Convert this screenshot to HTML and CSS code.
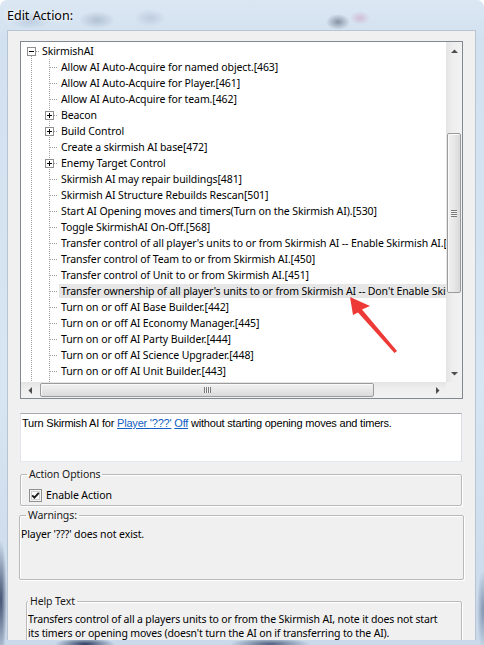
FILE: index.html
```html
<!DOCTYPE html>
<html>
<head>
<meta charset="utf-8">
<link rel="stylesheet" href="styles.css">
</head>
<body>
<div class="window">
  <div class="titlebar"><span class="title">Edit Action:</span></div>
  <div class="client">
    <div class="tree-box">
      <div class="tree-main">
        <div class="tree">
          <div class="row root"><svg class="box" width="9" height="9" viewBox="0 0 9 9"><rect x="0.5" y="0.5" width="8" height="8" fill="#fff" stroke="#8f8f8f"/><path d="M2 4.5h5" stroke="#000"/></svg><span class="hconn short"></span><span class="label">SkirmishAI</span></div>
          <div class="row leaf"><span class="hconn"></span><span class="label">Allow AI Auto-Acquire for named object.[463]</span></div>
          <div class="row leaf"><span class="hconn"></span><span class="label">Allow AI Auto-Acquire for Player.[461]</span></div>
          <div class="row leaf"><span class="hconn"></span><span class="label">Allow AI Auto-Acquire for team.[462]</span></div>
          <div class="row node"><svg class="box" width="9" height="9" viewBox="0 0 9 9"><rect x="0.5" y="0.5" width="8" height="8" fill="#fff" stroke="#8f8f8f"/><path d="M2 4.5h5M4.5 2v5" stroke="#000"/></svg><span class="hconn short"></span><span class="label">Beacon</span></div>
          <div class="row node"><svg class="box" width="9" height="9" viewBox="0 0 9 9"><rect x="0.5" y="0.5" width="8" height="8" fill="#fff" stroke="#8f8f8f"/><path d="M2 4.5h5M4.5 2v5" stroke="#000"/></svg><span class="hconn short"></span><span class="label">Build Control</span></div>
          <div class="row leaf"><span class="hconn"></span><span class="label">Create a skirmish AI base[472]</span></div>
          <div class="row node"><svg class="box" width="9" height="9" viewBox="0 0 9 9"><rect x="0.5" y="0.5" width="8" height="8" fill="#fff" stroke="#8f8f8f"/><path d="M2 4.5h5M4.5 2v5" stroke="#000"/></svg><span class="hconn short"></span><span class="label">Enemy Target Control</span></div>
          <div class="row leaf"><span class="hconn"></span><span class="label">Skirmish AI may repair buildings[481]</span></div>
          <div class="row leaf"><span class="hconn"></span><span class="label">Skirmish AI Structure Rebuilds Rescan[501]</span></div>
          <div class="row leaf"><span class="hconn"></span><span class="label">Start AI Opening moves and timers(Turn on the Skirmish AI).[530]</span></div>
          <div class="row leaf"><span class="hconn"></span><span class="label">Toggle SkirmishAI On-Off.[568]</span></div>
          <div class="row leaf"><span class="hconn"></span><span class="label">Transfer control of all player's units to or from Skirmish AI -- Enable Skirmish AI.[449]</span></div>
          <div class="row leaf"><span class="hconn"></span><span class="label">Transfer control of Team to or from Skirmish AI.[450]</span></div>
          <div class="row leaf"><span class="hconn"></span><span class="label">Transfer control of Unit to or from Skirmish AI.[451]</span></div>
          <div class="row leaf"><span class="hconn"></span><span class="label selected">Transfer ownership of all player's units to or from Skirmish AI -- Don't Enable Skirmish AI.[569]</span></div>
          <div class="row leaf"><span class="hconn"></span><span class="label">Turn on or off AI Base Builder.[442]</span></div>
          <div class="row leaf"><span class="hconn"></span><span class="label">Turn on or off AI Economy Manager.[445]</span></div>
          <div class="row leaf"><span class="hconn"></span><span class="label">Turn on or off AI Party Builder.[444]</span></div>
          <div class="row leaf"><span class="hconn"></span><span class="label">Turn on or off AI Science Upgrader.[448]</span></div>
          <div class="row leaf"><span class="hconn"></span><span class="label">Turn on or off AI Unit Builder.[443]</span></div>
          <div class="row leaf"><span class="hconn"></span><span class="label">Turn on or off AI Unit Upgrader.[447]</span></div>
        </div>
        <div class="vscroll">
          <div class="sbtn"><svg width="7" height="4" viewBox="0 0 7 4"><path d="M0 4L3.5 0.5L7 4Z" fill="#4d4d4d"/></svg></div>
          <div class="vtrack">
            <div class="vthumb"><span class="vgrip"></span></div>
          </div>
          <div class="sbtn"><svg width="7" height="4" viewBox="0 0 7 4"><path d="M0 0L3.5 3.5L7 0Z" fill="#4d4d4d"/></svg></div>
        </div>
      </div>
      <div class="hbar-row">
        <div class="hscroll">
          <div class="hbtn"><svg width="4" height="7" viewBox="0 0 4 7"><path d="M4 0L0.5 3.5L4 7Z" fill="#4d4d4d"/></svg></div>
          <div class="htrack"><div class="hthumb"><span class="hgrip"></span></div></div>
          <div class="hbtn"><svg width="4" height="7" viewBox="0 0 4 7"><path d="M0 0L3.5 3.5L0 7Z" fill="#4d4d4d"/></svg></div>
        </div>
        <div class="corner"></div>
      </div>
    </div>

    <div class="desc">Turn Skirmish AI for <a class="link">Player '???'</a> <a class="link">Off</a> without starting opening moves and timers.</div>

    <fieldset class="group action">
      <legend>Action Options</legend>
      <div class="check-row">
        <svg class="checkbox" width="13" height="13" viewBox="0 0 13 13"><rect x="0.5" y="0.5" width="12" height="12" fill="#f4f4f4" stroke="#8e8f8f"/><rect x="2.5" y="2.5" width="8" height="8" fill="#fff" stroke="#d0d0d0"/><path d="M3.2 6.4L5.4 8.7L9.8 3.8" fill="none" stroke="#1a1a1a" stroke-width="1.9"/></svg>
        <span>Enable Action</span>
      </div>
    </fieldset>

    <fieldset class="group warnings">
      <legend>Warnings:</legend>
      <div class="warn-text">Player '???' does not exist.</div>
    </fieldset>

    <fieldset class="group help">
      <legend>Help Text</legend>
      <div class="help-text">Transfers control of all a players units to or from the Skirmish AI, note it does not start<br>its timers or opening moves (doesn't turn the AI on if transferring to the AI).</div>
    </fieldset>
  </div>

  <svg class="annot" width="484" height="645" viewBox="0 0 484 645">
    <path d="M350 297L370 306L362 309.5L397 351L394.5 353L358 312.5L353 315Z" fill="#ee3a36"/>
  </svg>
</div>
</body>
</html>
```

FILE: styles.css
```css
html, body {
  margin: 0;
  padding: 0;
  background: #fff;
}

.window {
  position: relative;
  width: 484px;
  height: 645px;
  overflow: hidden;
  border-radius: 7px 7px 0 0;
  display: flex;
  flex-direction: column;
  background:
    radial-gradient(ellipse 22px 9px at 30px 20px, rgba(90,120,160,0.25), transparent),
    radial-gradient(ellipse 18px 9px at 97px 20px, rgba(70,90,120,0.25), transparent),
    radial-gradient(ellipse 12px 8px at 338px 22px, rgba(40,50,70,0.45), transparent),
    radial-gradient(ellipse 10px 7px at 360px 18px, rgba(200,120,160,0.35), transparent),
    radial-gradient(ellipse 16px 9px at 150px 18px, rgba(90,110,150,0.2), transparent),
    radial-gradient(ellipse 30px 6px at 85px 644px, rgba(30,45,80,0.9), transparent),
    radial-gradient(ellipse 40px 6px at 270px 644px, rgba(30,45,80,0.7), transparent),
    radial-gradient(ellipse 6px 60px at 1px 600px, rgba(30,45,80,0.8), transparent),
    radial-gradient(ellipse 6px 40px at 483px 610px, rgba(60,80,120,0.5), transparent),
    linear-gradient(180deg, #dbe7f3 0%, #d2e1f0 6%, #d8e5f2 60%, #c9d9ea 100%);
  font-family: "Noto Sans", "DejaVu Sans", sans-serif;
  color: #000;
}

.titlebar {
  height: 30px;
  flex: none;
  display: flex;
  align-items: center;
  padding-left: 7px;
  padding-top: 2px;
  box-sizing: border-box;
}

.title {
  font-size: 12.5px;
  line-height: 14px;
  text-shadow: 0 0 6px #fff, 0 0 3px #fff;
}

.client {
  flex: none;
  height: 610px;
  margin: 0 8px 0 7px;
  box-sizing: border-box;
  border: 1px solid #b8c4d1;
  border-bottom: none;
  background: #f0f0f0;
  overflow: hidden;
  display: flex;
  flex-direction: column;
  align-items: flex-start;
}

/* ---------- tree ---------- */
.tree-box {
  margin: 10px 0 0 12px;
  width: 443px;
  height: 358px;
  box-sizing: border-box;
  border: 1px solid #828790;
  background: #fff;
  flex: none;
}

.tree-main {
  display: flex;
  height: 340px;
}

.tree {
  width: 425px;
  height: 340px;
  box-sizing: border-box;
  padding-top: 1px;
  overflow: hidden;
  font-size: 10.5px;
  letter-spacing: -0.1px;
  background:
    repeating-linear-gradient(to bottom, #a0a0a0 0 1px, transparent 1px 2px) 10px 14px / 1px 100% no-repeat,
    repeating-linear-gradient(to bottom, #a0a0a0 0 1px, transparent 1px 2px) 28px 17px / 1px 100% no-repeat,
    #fff;
}

.row {
  height: 16px;
  display: flex;
  align-items: flex-start;
  white-space: nowrap;
}

.row.root { padding-left: 6px; }
.row.node { padding-left: 24px; }
.row.leaf { padding-left: 29px; }

.box {
  flex: none;
  margin-top: 4px;
  display: block;
}

.hconn {
  flex: none;
  width: 8px;
  height: 1px;
  margin-top: 8px;
  background: repeating-linear-gradient(to right, #a0a0a0 0 1px, transparent 1px 2px);
}

.hconn.short { width: 4px; }

.label {
  line-height: 16px;
  height: 16px;
  padding: 0 2px;
  margin-left: 1px;
}

.row.root .label { margin-left: 0; }

.label.selected {
  background: linear-gradient(transparent 1px, #e6e6e6 1px, #e6e6e6 15px, transparent 15px);
}

/* ---------- scrollbars ---------- */
.vscroll {
  width: 16px;
  height: 340px;
  display: flex;
  flex-direction: column;
  background: linear-gradient(90deg, #e4e4e4, #eeeeee 40%, #f2f2f2);
  flex: none;
}

.sbtn {
  height: 17px;
  flex: none;
  display: flex;
  align-items: center;
  justify-content: center;
}

.vtrack {
  flex: 1;
  padding: 0 1px;
}

.vthumb {
  margin-top: 74px;
  height: 160px;
  box-sizing: border-box;
  border: 1px solid #9b9b9b;
  border-radius: 2px;
  background: linear-gradient(90deg, #f1f1f1, #e7e7e7 50%, #dadada);
  display: flex;
  align-items: center;
  justify-content: center;
  box-shadow: inset 1px 1px 0 #fafafa;
}

.vgrip {
  width: 6px;
  height: 7px;
  background: repeating-linear-gradient(to bottom, #7a7a7a 0 1px, #f4f4f4 1px 2px);
}

.hbar-row {
  display: flex;
  height: 16px;
}

.hscroll {
  width: 425px;
  height: 16px;
  display: flex;
  background: linear-gradient(180deg, #e4e4e4, #eeeeee 40%, #f2f2f2);
  flex: none;
}

.hbtn {
  width: 17px;
  flex: none;
  display: flex;
  align-items: center;
  justify-content: center;
}

.htrack {
  flex: 1;
  padding: 1px 0;
  box-sizing: border-box;
}

.hthumb {
  margin-left: 2px;
  width: 334px;
  height: 14px;
  box-sizing: border-box;
  border: 1px solid #9b9b9b;
  border-radius: 2px;
  background: linear-gradient(180deg, #f1f1f1, #e7e7e7 50%, #dadada);
  display: flex;
  align-items: center;
  justify-content: center;
  box-shadow: inset 1px 1px 0 #fafafa;
}

.hgrip {
  width: 7px;
  height: 6px;
  background: repeating-linear-gradient(to right, #7a7a7a 0 1px, #f4f4f4 1px 2px);
}

.corner {
  width: 16px;
  height: 16px;
  background: #f0f0f0;
}

/* ---------- description ---------- */
.desc {
  flex: none;
  margin: 14px 0 0 12px;
  width: 442px;
  height: 49px;
  box-sizing: border-box;
  border: 1px solid;
  border-color: #a6a9b0 #dadde3 #e3e9ef #e2e3ea;
  background: #fff;
  padding: 2px 1px;
  font-family: "Liberation Sans", Arial, sans-serif;
  font-size: 11px;
  letter-spacing: -0.2px;
  line-height: 14px;
  white-space: nowrap;
}

.link {
  color: #1360c2;
  text-decoration: underline;
}

/* ---------- group boxes ---------- */
.group {
  flex: none;
  margin: 0;
  padding: 0;
  box-sizing: border-box;
  border: 1px solid #b9b9b9;
  border-radius: 2px;
  box-shadow: inset 1px 1px 0 #fff, 1px 1px 0 #fff;
  font-size: 10.5px;
  letter-spacing: -0.1px;
  min-width: 0;
}

.group legend {
  padding: 0 2px;
  margin-left: 6px;
  font-size: 10.5px;
  line-height: 14px;
  color: #1a1a1a;
}

.action {
  margin: 5px 0 0 12px;
  width: 442px;
  height: 39px;
  padding: 7px 8px 0 8px;
}

.action legend { margin-left: -2px; }

.check-row {
  display: flex;
  align-items: center;
  height: 14px;
  gap: 4px;
  line-height: 14px;
}

.checkbox {
  display: block;
  flex: none;
}

.warnings {
  margin: 2px 0 0 11px;
  width: 445px;
  height: 72px;
  padding: 5px 0 0 1px;
}

.warnings legend { margin-left: 5px; }

.warn-text {
  line-height: 14px;
}

.help {
  margin: 14px 0 0 18px;
  width: 436px;
  height: 60px;
  padding: 4px 0 0 1px;
}

.help legend { margin-left: 0; }

.help-text {
  line-height: 14px;
  white-space: nowrap;
  letter-spacing: -0.15px;
}

/* ---------- annotation ---------- */
.annot {
  position: absolute;
  left: 0;
  top: 0;
  pointer-events: none;
}
```
